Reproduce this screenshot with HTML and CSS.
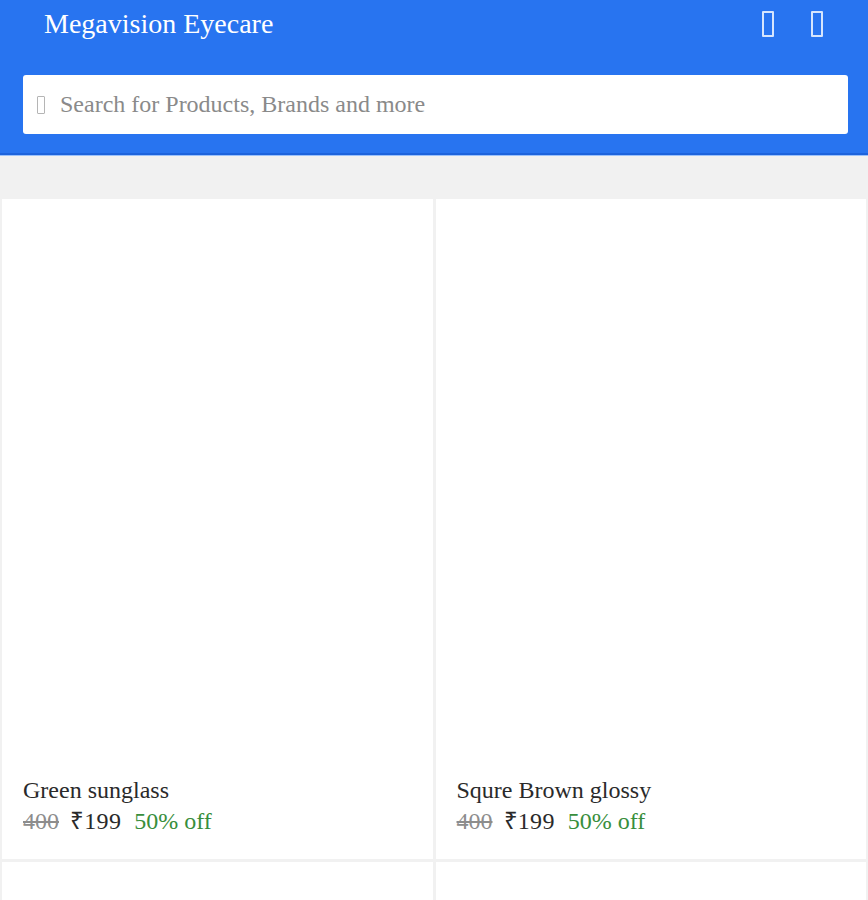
FILE: index.html
```html
<!DOCTYPE html>
<html lang="en">
<head>
<meta charset="utf-8">
<title>Megavision Eyecare</title>
<link rel="stylesheet" href="styles.css">
</head>
<body>
<header class="header">
  <div class="topbar">
    <div class="brand">Megavision Eyecare</div>
    <div class="actions">
      <span class="tofu tofu-light"></span>
      <span class="tofu tofu-light"></span>
    </div>
  </div>
  <div class="search">
    <span class="tofu tofu-gray"></span>
    <span class="placeholder">Search for Products, Brands and more</span>
  </div>
</header>
<div class="spacer"></div>
<main class="grid">
  <div class="card">
    <div class="name">Green sunglass</div>
    <div class="prices"><span class="mrp">400</span><span class="price">₹199</span><span class="off">50% off</span></div>
  </div>
  <div class="card">
    <div class="name">Squre Brown glossy</div>
    <div class="prices"><span class="mrp">400</span><span class="price">₹199</span><span class="off">50% off</span></div>
  </div>
  <div class="card"></div>
  <div class="card"></div>
</main>
</body>
</html>
```
FILE: styles.css
```css
html, body {
  margin: 0;
  padding: 0;
}
body {
  background: #f1f1f1;
  font-family: "Liberation Serif", "Times New Roman", serif;
  width: 868px;
}
.header {
  background: #2874f0;
  height: 155px;
  box-sizing: border-box;
  padding: 0 20px 0 23px;
  border-bottom: 2px solid #1d63dc;
  box-shadow: 0 1px 0 #9cc2fb;
}
.topbar {
  height: 50px;
  display: flex;
  align-items: center;
  justify-content: space-between;
}
.brand {
  color: #fff;
  font-size: 28px;
  padding-left: 21px;
  margin-top: -3px;
}
.actions {
  display: flex;
  gap: 37px;
  padding-right: 25px;
  margin-top: -2px;
}
.tofu {
  display: inline-block;
  box-sizing: border-box;
  border-radius: 1px;
}
.tofu-light {
  width: 12px;
  height: 26px;
  border: 2px solid #d6e5fd;
}
.tofu-gray {
  width: 8px;
  height: 18px;
  border: 1.5px solid #b5b5b5;
}
.search {
  margin-top: 25px;
  height: 59px;
  background: #fff;
  border-radius: 3px;
  box-sizing: border-box;
  display: flex;
  align-items: center;
  padding-left: 14px;
  gap: 15px;
}
.placeholder {
  color: #8a8a8a;
  font-size: 24px;
}
.spacer {
  height: 44px;
}
.grid {
  display: grid;
  grid-template-columns: 1fr 1fr;
  gap: 3px;
  padding: 0 2px;
}
.card {
  background: #fff;
  height: 660px;
  box-sizing: border-box;
  display: flex;
  flex-direction: column;
  justify-content: flex-end;
  padding: 0 21px 23px;
}
.name {
  color: #2a2a2a;
  font-size: 24px;
}
.prices {
  font-size: 24px;
  display: flex;
  align-items: baseline;
  margin-top: -1px;
}
.mrp {
  color: #8d8d8d;
  text-decoration: line-through;
}
.price {
  color: #2a2a2a;
  margin-left: 11px;
  letter-spacing: 0.3px;
}
.off {
  color: #388e3c;
  margin-left: 13px;
}
```
